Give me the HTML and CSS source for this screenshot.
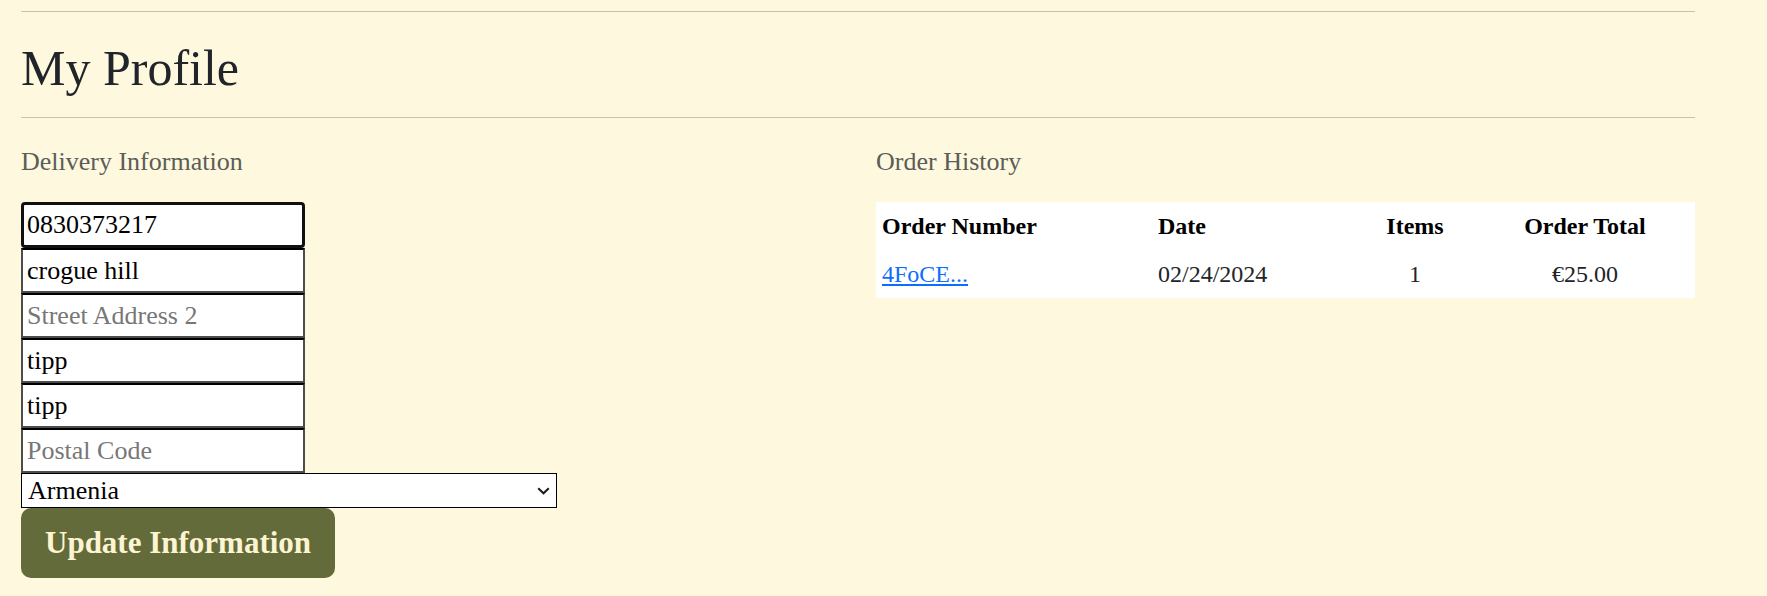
FILE: index.html
```html
<!DOCTYPE html>
<html lang="en">
<head>
<meta charset="utf-8">
<title>My Profile</title>
<link rel="stylesheet" href="styles.css">
</head>
<body>
<main class="page">
  <hr class="rule rule--top">
  <h1 class="title">My Profile</h1>
  <hr class="rule">
  <div class="columns">
    <section class="panel">
      <h4 class="panel-title">Delivery Information</h4>
      <form class="profile-form">
        <input class="field field--focused" type="text" value="0830373217">
        <input class="field" type="text" value="crogue hill">
        <input class="field" type="text" placeholder="Street Address 2">
        <input class="field" type="text" value="tipp">
        <input class="field" type="text" value="tipp">
        <input class="field" type="text" placeholder="Postal Code">
        <div class="select-wrap">
          <select class="country">
            <option>Armenia</option>
          </select>
          <svg class="chevron" width="13" height="8" viewBox="0 0 13 8" aria-hidden="true">
            <polyline points="1.2,1.2 6.5,6.3 11.8,1.2" fill="none" stroke="#1a1a1a" stroke-width="2"/>
          </svg>
        </div>
        <button class="btn-update" type="button">Update Information</button>
      </form>
    </section>
    <section class="panel">
      <h4 class="panel-title">Order History</h4>
      <table class="orders">
        <colgroup>
          <col class="c-num">
          <col class="c-date">
          <col class="c-items">
          <col class="c-total">
        </colgroup>
        <thead>
          <tr>
            <th>Order Number</th>
            <th>Date</th>
            <th class="center">Items</th>
            <th class="center">Order Total</th>
          </tr>
        </thead>
        <tbody>
          <tr>
            <td><a class="order-link" href="#">4FoCE...</a></td>
            <td>02/24/2024</td>
            <td class="center">1</td>
            <td class="center">€25.00</td>
          </tr>
        </tbody>
      </table>
    </section>
  </div>
</main>
</body>
</html>
```
FILE: styles.css
```css
html, body {
  margin: 0;
  padding: 0;
}

body {
  background: #fef8de;
  color: #212529;
  font-family: "Liberation Serif", "Times New Roman", serif;
}

.page {
  width: 1674px;
  padding: 0 72px 0 21px;
}

.rule {
  border: 0;
  border-top: 1px solid #c6c3b0;
  height: 0;
  margin: 0;
}

.rule--top {
  margin-top: 11px;
}

.title {
  margin: 26px 0 19px;
  font-size: 50px;
  line-height: 60px;
  font-weight: 400;
  color: #212529;
}

.columns {
  display: grid;
  grid-template-columns: 819px 819px;
  column-gap: 36px;
}

.panel-title {
  margin: 29px 0 25px;
  font-size: 26px;
  line-height: 30px;
  font-weight: 400;
  color: #5b5d59;
}

.profile-form {
  display: flex;
  flex-direction: column;
  align-items: flex-start;
}

.field {
  box-sizing: border-box;
  width: 284px;
  height: 45px;
  margin: 0;
  padding: 0 4px;
  background: #fff;
  border: 2px solid #4d4d4d;
  border-top-color: #000;
  border-radius: 0;
  font-family: "Liberation Serif", "Times New Roman", serif;
  font-size: 26px;
  color: #000;
  outline: none;
}

.field::placeholder {
  color: #777;
}

.field--focused {
  height: 46px;
  border: 3px solid #111;
  border-radius: 4px;
  padding: 0 3px;
}

.select-wrap {
  position: relative;
  width: 536px;
}

.country {
  display: block;
  box-sizing: border-box;
  width: 100%;
  height: 35px;
  margin: 0;
  padding: 0 0 0 6px;
  -webkit-appearance: none;
  appearance: none;
  background: #fff;
  border: 1px solid #000;
  border-radius: 0;
  font-family: "Liberation Serif", "Times New Roman", serif;
  font-size: 26px;
  color: #000;
}

.chevron {
  position: absolute;
  right: 7px;
  top: 14px;
  pointer-events: none;
}

.btn-update {
  box-sizing: border-box;
  height: 70px;
  margin: 0;
  padding: 0 24px;
  background: #626b39;
  color: #fdf4d2;
  border: 0;
  border-radius: 10px;
  font-family: "Liberation Serif", "Times New Roman", serif;
  font-size: 31px;
  font-weight: 700;
}

.orders {
  width: 819px;
  border-collapse: collapse;
  background: #fff;
  table-layout: fixed;
}

.c-num { width: 276px; }
.c-date { width: 203px; }
.c-items { width: 120px; }
.c-total { width: 220px; }

.orders th,
.orders td {
  box-sizing: border-box;
  height: 48px;
  padding: 0 6px;
  text-align: left;
  vertical-align: middle;
  font-size: 24px;
  line-height: 28px;
}

.orders th {
  font-weight: 700;
  color: #000;
}

.orders td {
  font-weight: 400;
  color: #212529;
}

.orders .center {
  text-align: center;
}

.order-link {
  color: #0d6efd;
  text-decoration: underline;
}
```
